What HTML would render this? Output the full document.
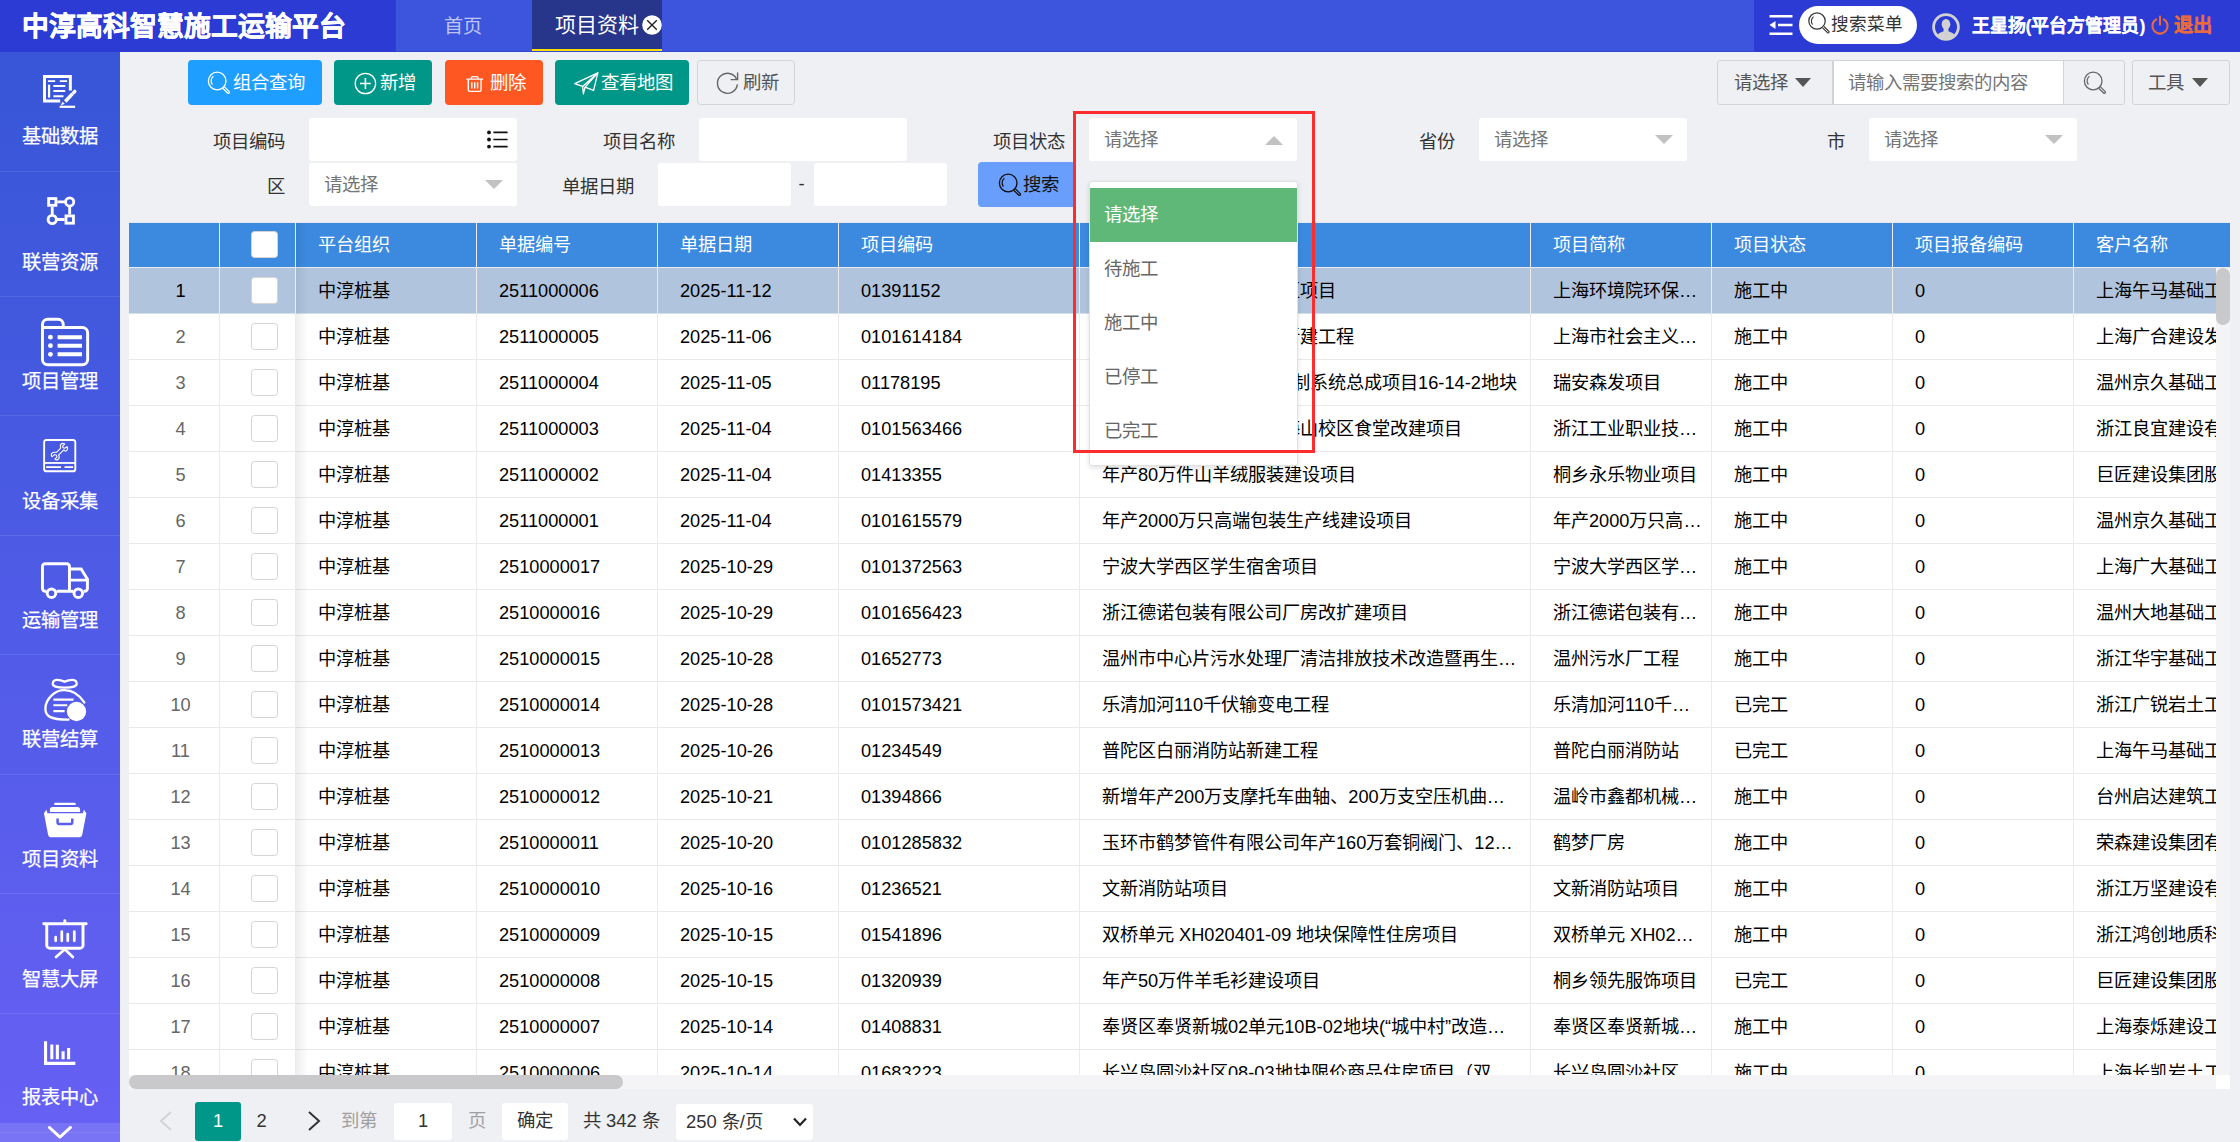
<!DOCTYPE html>
<html lang="zh-CN">
<head>
<meta charset="utf-8">
<title>项目资料</title>
<style>
*{box-sizing:border-box;margin:0;padding:0}
html,body{width:2240px;height:1142px;overflow:hidden}
body{position:relative;background:#eff0f4;font-family:"Liberation Sans",sans-serif;font-size:18.4px;color:#333}
.abs{position:absolute}
i{font-style:normal}
svg{position:absolute;overflow:visible}
/* header */
#logo{left:0;top:0;width:396px;height:52px;background:#2b3bd3}
#logo span{position:absolute;left:22px;top:2px;line-height:51px;font-size:26.8px;font-weight:bold;color:#fff;white-space:nowrap;-webkit-text-stroke:0.5px #fff}
#tabs{left:396px;top:0;width:1358px;height:52px;background:#3c55dc}
#hright{left:1754px;top:0;width:486px;height:52px;background:#2b3bd3}
.tab{position:absolute;top:0;height:52px;line-height:52px;white-space:nowrap}
#tab1{left:395px;width:136px;text-align:center;padding-top:0.5px;color:rgba(255,255,255,.68);font-size:19.2px}
#tab2{left:532px;width:130px;background:#27358a;color:#fff;font-size:21px;border-bottom:3px solid #ffe000;line-height:50px}
#tab2 span{position:absolute;left:23px}
/* sidebar */
#side{left:0;top:52px;width:120px;height:1090px;background:linear-gradient(180deg,#3856d7 0%,#4459df 30%,#545ce9 60%,#6760f4 100%)}
.sl{position:absolute;left:0;width:120px;text-align:center;color:#fff;font-size:19.3px;line-height:24px;margin-top:1.6px;-webkit-text-stroke:0.25px #fff;white-space:nowrap}
.sep{position:absolute;left:0;width:120px;height:1px;background:rgba(255,255,255,.09)}
#sdown{left:0;top:1123px;width:120px;height:19px;background:rgba(255,255,255,.12)}
/* toolbar */
.btn{position:absolute;top:60px;height:45px;border-radius:4px;color:#fff;white-space:nowrap;line-height:45px}
.btn span{position:absolute;top:0}
.bbd{border:1px solid #d3d3d4;color:#555;background:transparent}
/* form */
.lab{position:absolute;text-align:right;color:#333;white-space:nowrap;line-height:43px;height:43px;margin-left:-1px;padding-top:1.6px}
.inp{position:absolute;background:#fff;border-radius:3px;height:43px;line-height:43px;color:#757575;white-space:nowrap}
.inp span{position:absolute;left:15px;top:0}
.tri{position:absolute;width:0;height:0;border-left:9px solid transparent;border-right:9px solid transparent;border-top:9px solid #c2c2c2}
.triu{position:absolute;width:0;height:0;border-left:9px solid transparent;border-right:9px solid transparent;border-bottom:9px solid #c2c2c2}
/* table */
#thead{left:129px;top:222px;width:2101px;height:46px;background:#3c8adf;overflow:hidden;border-top:1px solid #e9e6e6}
#thead .c{color:#fff;height:45px;line-height:45px;top:0;border-bottom:1px solid #ececec}
#tbody{left:129px;top:268px;width:2087px;height:807px;background:#fff;overflow:hidden}
.r{position:absolute;left:0;width:2200px;height:46px}
.r.sel{background:#b0c4de}
.c{position:absolute;top:0;height:46px;line-height:47px;padding:0 0 0 22px;font-size:18.2px;white-space:nowrap;overflow:hidden;color:#000;border-bottom:1px solid #e9e9e9}
.num{text-align:center;padding:0 0 0 13px;color:#666}
.sel .num{color:#000}
.sel .c{border-bottom-color:#d5deeb}
.chk{padding:0}
.cb{position:absolute;left:31px;top:9px;width:27px;height:27px;border:1px solid #d6d3d0;border-radius:3.5px;background:#fff}
#thead .cb{top:8px}
.vl{position:absolute;top:0;width:1px;background:#ebebeb}
.vlh{position:absolute;top:0;width:1px;height:46px;background:#ececec}
/* dropdown */
#dd{left:1088.5px;top:181px;width:209px;height:285px;background:#fff;border:1px solid #e2e2e2;border-radius:3px;box-shadow:0 2px 5px rgba(0,0,0,.12)}
#dd div{position:absolute;left:0;width:207px;height:53.6px;line-height:53px;padding-left:14px;color:#666;white-space:nowrap}
#dd div.on{background:#5fb878;color:#fff}
#redbox{left:1073px;top:111px;width:242px;height:342px;border:3px solid #fd2d2f}
/* page */
.pg{position:absolute;white-space:nowrap;line-height:38px;height:38px;top:1102px}
</style>
</head>
<body>
<!-- header -->
<div id="logo" class="abs"><span>中淳高科智慧施工运输平台</span></div>
<div id="tabs" class="abs"></div>
<div id="tab1" class="tab">首页</div>
<div id="tab2" class="tab"><span>项目资料</span>
<svg style="left:110px;top:14.5px" width="20" height="20" viewBox="0 0 20 20"><circle cx="10" cy="10" r="9.8" fill="#fff"/><path d="M5.2 5.2L14.8 14.8M14.8 5.2L5.2 14.8" stroke="#222" stroke-width="1.4" fill="none"/></svg>
</div>
<div id="hright" class="abs"></div>
<div class="abs" style="left:396px;top:51px;width:1358px;height:1px;background:#3049d3"></div><div class="abs" style="left:395px;top:0;width:1px;height:52px;background:#2d42bd"></div>
<svg style="left:1769px;top:14px" width="24" height="22" viewBox="0 0 24 22"><path d="M0.5 2.2H23.5M9 11H23.5M0.5 19.8H23.5" stroke="#fff" stroke-width="2.6" fill="none"/><path d="M0.5 11L6.5 7V15Z" fill="#fff"/></svg>
<div class="abs" style="left:1799px;top:5.5px;width:117.5px;height:38.5px;border-radius:20px;background:#fff"></div>
<svg style="left:1808px;top:12px" width="22" height="22" viewBox="0 0 22 22"><circle cx="9" cy="9" r="8.2" fill="none" stroke="#333" stroke-width="1.2"/><path d="M4.6 12.5A5.6 5.6 0 0 1 5.6 4.6" fill="none" stroke="#333" stroke-width="1.1"/><path d="M14.6 15.8L19.5 20.6A0.9 0.9 0 0 0 20.9 19.3L16 14.5" fill="#fff" stroke="#333" stroke-width="1.1"/></svg>
<div class="abs" style="left:1831px;top:5.5px;height:38.5px;line-height:37px;font-size:17.6px;color:#333;white-space:nowrap">搜索菜单</div>
<svg style="left:1932px;top:13px" width="28" height="28" viewBox="0 0 28 28"><circle cx="14" cy="14" r="12.4" fill="#2b3bd3" stroke="#d2d2d2" stroke-width="2.8"/><ellipse cx="14" cy="11.2" rx="4.3" ry="5.2" fill="#d2d2d2"/><path d="M11.6 14.5H16.4V18.2C18.6 19.2 21.6 19.6 22.8 22.3A12 12 0 0 1 5.2 22.3C6.4 19.6 9.4 19.2 11.6 18.2Z" fill="#d2d2d2"/></svg>
<div class="abs" style="left:1971.5px;top:0;height:52px;line-height:52px;font-size:17.9px;font-weight:bold;color:#fff;white-space:nowrap;-webkit-text-stroke:0.15px #fff">王星扬(平台方管理员)</div>
<svg style="left:2151px;top:16px" width="18" height="18" viewBox="0 0 18 18"><path d="M5.2 3.4A7.6 7.6 0 1 0 12.8 3.4" fill="none" stroke="#e8693e" stroke-width="2.1" stroke-linecap="round"/><path d="M9 0.6V8.8" stroke="#e8693e" stroke-width="2.1" stroke-linecap="round"/></svg>
<div class="abs" style="left:2174px;top:0;height:52px;line-height:51px;font-size:19.2px;font-weight:bold;color:#ea6a40;white-space:nowrap;-webkit-text-stroke:0.3px #ea6a40">退出</div>
<!-- sidebar -->
<div id="side" class="abs"></div>
<div class="sep" style="top:171px"></div><div class="sep" style="top:296px"></div><div class="sep" style="top:415px"></div><div class="sep" style="top:535px"></div><div class="sep" style="top:654px"></div><div class="sep" style="top:774px"></div><div class="sep" style="top:893px"></div><div class="sep" style="top:1013px"></div>
<div id="sdown" class="abs"></div><div class="sep" style="top:1132px"></div>
<svg style="left:0;top:52px" width="120" height="120" viewBox="0 0 1142 1142" fill="none" stroke="#fff"><path d="M573 466H423.5V233.6H669.5V366" stroke-width="28" stroke-linejoin="miter"/><path d="M456 277H525M569 277H638M508 323.6H621M508 371H621M508 421H604" stroke-width="18"/><path d="M467 311V434" stroke-width="21"/><path d="M621 471L691 396" stroke-width="34"/><path d="M702 385L712 375" stroke-width="32" stroke-linecap="round"/><path d="M577 510L594 473L617 492Z" fill="#fff" stroke="none"/><path d="M568 521.6H715" stroke-width="21"/></svg>
<svg style="left:0;top:172px" width="120" height="120" viewBox="0 0 1142 1142" fill="none" stroke="#fff" stroke-width="27"><rect x="463" y="253" width="69" height="64"/><circle cx="663" cy="285" r="39"/><circle cx="497" cy="452" r="39"/><rect x="628" y="418" width="71" height="69"/><path d="M545 285H624M663 324V405M536 452H615M497 330V413"/></svg>
<svg style="left:0;top:296px" width="120" height="120" viewBox="0 0 1142 1142" fill="none" stroke="#fff" stroke-width="28"><path d="M404 604V271A50 50 0 0 1 454 221H552A50 50 0 0 1 602 271V299H784A50 50 0 0 1 834 349V604A50 50 0 0 1 784 654H454A50 50 0 0 1 404 604ZM404 299H602"/><path d="M548 392H780M548 473H780M548 555H780" stroke-width="38"/><g fill="#fff" stroke="none"><circle cx="480" cy="392" r="23"/><circle cx="480" cy="473" r="23"/><circle cx="480" cy="555" r="23"/></g></svg>
<svg style="left:0;top:416px" width="120" height="120" viewBox="0 0 1142 1142" fill="none" stroke="#fff" stroke-width="18"><rect x="420" y="228" width="296.7" height="298.3" rx="23"/><path d="M420 447H716.7" stroke-width="17"/><path d="M439 486.3H581M614 486.3H696" stroke-width="16"/><g transform="translate(380.7,190.3) scale(0.3333)"><path d="M590 345C600 310 560 280 590 245C615 215 665 205 705 230L645 290C640 320 670 350 705 350L770 305C800 340 790 400 745 425C715 440 690 420 680 395L530 545C570 590 550 650 500 675C470 685 440 675 425 660L490 595C480 560 450 530 415 530L345 590C310 570 315 510 350 480C385 450 430 470 470 465Z" stroke-width="32" stroke-linejoin="round"/></g></svg>
<svg style="left:0;top:536px" width="120" height="120" viewBox="0 0 1142 1142" fill="none" stroke="#fff" stroke-width="28"><path d="M440 526H430A26 26 0 0 1 404 500V290A26 26 0 0 1 430 264H635A26 26 0 0 1 661 290V526M540 526H695M661 314H772L832 410V500A26 26 0 0 1 806 526H796M661 420H832"/><circle cx="490" cy="545" r="41"/><circle cx="745" cy="545" r="41"/></svg>
<svg style="left:0;top:656px" width="120" height="120" viewBox="0 0 1142 1142" fill="none" stroke="#fff" stroke-width="22"><path d="M502 268C500 210 570 225 615 244C660 225 732 210 730 268C728 312 504 312 502 268Z"/><path d="M802 442C745 355 680 325 612 325C520 325 432 410 432 500C432 572 470 604 652 606" stroke-linecap="round"/><path d="M508 415H700M508 468H640M508 525H615" stroke-width="20"/><circle cx="728" cy="528" r="92" fill="#fff" stroke="none"/></svg>
<svg style="left:0;top:776px" width="120" height="120" viewBox="0 0 1142 1142" fill="#fff" stroke="none"><rect x="515" y="255" width="207" height="22" rx="11"/><path d="M475 342V320A25 25 0 0 1 500 295H737A25 25 0 0 1 762 320V342Z"/><path d="M442 322L452 354H788L798 322L822 354L782 562A24 24 0 0 1 760 582H480A24 24 0 0 1 458 562L418 354Z"/><path d="M548 405V440A16 16 0 0 0 564 456H672A16 16 0 0 0 688 440V405" fill="none" stroke="#5a5eed" stroke-width="24"/></svg>
<svg style="left:0;top:896px" width="120" height="120" viewBox="0 0 1142 1142" fill="none" stroke="#fff" stroke-width="28" stroke-linecap="round"><path d="M416 265H820M617 236V265"/><path d="M445 265V468A29 29 0 0 0 474 497H761A29 29 0 0 0 790 468V265" stroke-linecap="butt"/><path d="M617 507L533 580M617 507L693 580" stroke-width="26"/><path d="M530 392V426M588 338V426M645 362V426M707 338V426" stroke-width="26"/></svg>
<svg style="left:0;top:1016px" width="120" height="126" viewBox="0 0 1088 1142" fill="none" stroke="#fff" stroke-width="28"><path d="M413 228V429H683"/><path d="M470 258V392M520 260V392M572 320V392M622 290V392"/><path d="M447 1010L543 1098L640 1010" stroke-width="26" stroke-linecap="round" stroke-linejoin="round"/></svg>
<div class="sl" style="top:123.5px">基础数据</div>
<div class="sl" style="top:249px">联营资源</div>
<div class="sl" style="top:368px">项目管理</div>
<div class="sl" style="top:488px">设备采集</div>
<div class="sl" style="top:607px">运输管理</div>
<div class="sl" style="top:726.7px">联营结算</div>
<div class="sl" style="top:846px">项目资料</div>
<div class="sl" style="top:966px">智慧大屏</div>
<div class="sl" style="top:1084.8px">报表中心</div>

<!-- toolbar -->
<div class="btn" style="left:188px;width:134px;background:#1e9fff"><svg style="left:19px;top:11px" width="24" height="24" viewBox="0 0 24 24" fill="none" stroke="#fff"><circle cx="10.2" cy="10" r="8.8" stroke-width="1.3"/><path d="M5.4 13.6A6 6 0 0 1 6.4 5.2" stroke-width="1.2"/><path d="M15.6 17.2L20.6 22A1 1 0 0 0 22.2 20.6L17.2 15.6" stroke-width="1.3"/></svg><span style="left:45px">组合查询</span></div>
<div class="btn" style="left:334px;width:98px;background:#009688"><svg style="left:19.5px;top:11.5px" width="23" height="23" viewBox="0 0 23 23" fill="none" stroke="#fff"><circle cx="11.4" cy="11.5" r="10.2" stroke-width="1.3"/><path d="M6 11.5H16.8M11.4 6.1V16.9" stroke-width="1.6"/></svg><span style="left:46px">新增</span></div>
<div class="btn" style="left:445px;width:98px;background:#ff5722"><svg style="left:21.2px;top:15.5px" width="17.4" height="16.2" viewBox="0 0 18 18" preserveAspectRatio="none" fill="none" stroke="#fff" stroke-width="1.4"><path d="M0.3 3.6H17.7M5.6 3.4V1.9A1.2 1.2 0 0 1 6.8 0.7H11.2A1.2 1.2 0 0 1 12.4 1.9V3.4"/><path d="M2.4 3.8V15.6A1.6 1.6 0 0 0 4 17.2H14A1.6 1.6 0 0 0 15.6 15.6V3.8"/><path d="M6 7V14M9 7V14M12 7V14" stroke-width="1.5"/></svg><span style="left:45px">删除</span></div>
<div class="btn" style="left:555px;width:134px;background:#009688"><svg style="left:19px;top:11.5px" width="25" height="23" viewBox="0 0 25 23" fill="none" stroke="#fff" stroke-width="1.3" stroke-linejoin="round"><path d="M0.8 11.6L23.8 0.8L19.6 18.4L11 15.2L9.4 21.8L8.6 14.4Z"/><path d="M8.6 14.4L23.8 0.8L11 15.2"/></svg><span style="left:45.5px">查看地图</span></div>
<div class="btn bbd" style="left:697px;width:98px"><svg style="left:17.5px;top:9.5px" width="23" height="23" viewBox="0 0 23 23" fill="none" stroke="#666" stroke-width="1.4"><path d="M20.6 8.2A10 10 0 1 0 21.4 13.4"/><path d="M21.6 1.6V8.6H14.6"/></svg><span style="left:44.5px;top:-1px">刷新</span></div>
<div class="btn bbd" style="left:1717px;width:116px;border-radius:3px 0 0 3px"><span style="left:15.5px;top:-1px;color:#555">请选择</span><i class="abs" style="left:77px;top:17px;border-left:8.5px solid transparent;border-right:8.5px solid transparent;border-top:9px solid #555"></i></div>
<div class="btn" style="left:1832.5px;width:231px;background:#fff;border:1px solid #d3d3d4;border-radius:0;color:#757575"><span style="left:14.5px;top:-1.5px">请输入需要搜索的内容</span></div>
<div class="btn bbd" style="left:2063px;width:61.5px;border-radius:0 3px 3px 0"><svg style="left:18.5px;top:9.5px" width="24" height="24" viewBox="0 0 24 24" fill="none" stroke="#666"><circle cx="10.2" cy="10" r="8.8" stroke-width="1.3"/><path d="M5.4 13.6A6 6 0 0 1 6.4 5.2" stroke-width="1.2"/><path d="M15.6 17.2L20.6 22A1 1 0 0 0 22.2 20.6L17.2 15.6" stroke-width="1.3"/></svg></div>
<div class="btn bbd" style="left:2132px;width:97.5px;border-radius:3px"><span style="left:15px;top:-1px;color:#555">工具</span><i class="abs" style="left:58.5px;top:17px;border-left:8.5px solid transparent;border-right:8.5px solid transparent;border-top:9px solid #555"></i></div>

<!-- form -->
<div class="lab" style="left:160px;width:125.5px;top:118px">项目编码</div>
<div class="inp" style="left:309px;width:208px;top:118px"><svg style="left:178px;top:11.5px" width="21" height="19" viewBox="0 0 21 19"><g fill="#111"><circle cx="2" cy="2.4" r="1.9"/><circle cx="2" cy="9.5" r="1.9"/><circle cx="2" cy="16.6" r="1.9"/></g><path d="M6.4 2.4H20.6M6.4 9.5H20.6M6.4 16.6H20.6" stroke="#111" stroke-width="1.6"/></svg></div>
<div class="lab" style="left:550px;width:125.5px;top:118px">项目名称</div>
<div class="inp" style="left:699px;width:208px;top:118px"></div>
<div class="lab" style="left:940px;width:125.5px;top:118px">项目状态</div>
<div class="inp" style="left:1089px;width:208px;top:118px"><span>请选择</span><i class="triu" style="left:176px;top:17.5px"></i></div>
<div class="lab" style="left:1330px;width:125.5px;top:118px">省份</div>
<div class="inp" style="left:1479px;width:208px;top:118px"><span>请选择</span><i class="tri" style="left:176px;top:17px"></i></div>
<div class="lab" style="left:1720px;width:125.5px;top:118px">市</div>
<div class="inp" style="left:1869px;width:208px;top:118px"><span>请选择</span><i class="tri" style="left:176px;top:17px"></i></div>
<div class="lab" style="left:160px;width:125.5px;top:163.2px">区</div>
<div class="inp" style="left:309px;width:208px;top:163.2px"><span>请选择</span><i class="tri" style="left:176px;top:17px"></i></div>
<div class="lab" style="left:509px;width:125.5px;top:163.2px">单据日期</div>
<div class="inp" style="left:658px;width:133px;top:163.2px"></div>
<div class="abs" style="left:798.5px;top:163.2px;line-height:42px;color:#333">-</div>
<div class="inp" style="left:814px;width:133px;top:163.2px"></div>
<div class="btn" style="left:978px;top:162px;width:98px;height:45px;background:#6a9efc;color:#111"><svg style="left:20px;top:11px" width="24" height="24" viewBox="0 0 24 24" fill="none" stroke="#111"><circle cx="10.2" cy="10" r="8.8" stroke-width="1.3"/><path d="M5.4 13.6A6 6 0 0 1 6.4 5.2" stroke-width="1.2"/><path d="M15.6 17.2L20.6 22A1 1 0 0 0 22.2 20.6L17.2 15.6" stroke-width="1.3"/></svg><span style="left:45px;top:-0.5px">搜索</span></div>

<!-- table -->
<div id="thead" class="abs"><div class="c " style="left:0px;width:90px"></div><div class="c chk" style="left:91px;width:75px"><i class="cb"></i></div><div class="c " style="left:167px;width:180px">平台组织</div><div class="c " style="left:348px;width:180px">单据编号</div><div class="c " style="left:529px;width:180px">单据日期</div><div class="c " style="left:710px;width:240px">项目编码</div><div class="c " style="left:951px;width:450px">项目名称</div><div class="c " style="left:1402px;width:180px">项目简称</div><div class="c " style="left:1583px;width:180px">项目状态</div><div class="c " style="left:1764px;width:180px">项目报备编码</div><div class="c " style="left:1945px;width:180px">客户名称</div></div>
<div id="tbody" class="abs">
<div class="r sel" style="top:0px"><div class="c num" style="left:0px;width:90px">1</div><div class="c chk" style="left:91px;width:75px"><i class="cb"></i></div><div class="c " style="left:167px;width:180px">中淳桩基</div><div class="c " style="left:348px;width:180px">2511000006</div><div class="c " style="left:529px;width:180px">2025-11-12</div><div class="c " style="left:710px;width:240px">01391152</div><div class="c " style="left:951px;width:450px">上海环境院环保科技园区项目</div><div class="c " style="left:1402px;width:180px">上海环境院环保…</div><div class="c " style="left:1583px;width:180px">施工中</div><div class="c " style="left:1764px;width:180px">0</div><div class="c " style="left:1945px;width:180px">上海午马基础工程</div></div>
<div class="r" style="top:46px"><div class="c num" style="left:0px;width:90px">2</div><div class="c chk" style="left:91px;width:75px"><i class="cb"></i></div><div class="c " style="left:167px;width:180px">中淳桩基</div><div class="c " style="left:348px;width:180px">2511000005</div><div class="c " style="left:529px;width:180px">2025-11-06</div><div class="c " style="left:710px;width:240px">0101614184</div><div class="c " style="left:951px;width:450px">上海市社会主义学院楼新建工程</div><div class="c " style="left:1402px;width:180px">上海市社会主义…</div><div class="c " style="left:1583px;width:180px">施工中</div><div class="c " style="left:1764px;width:180px">0</div><div class="c " style="left:1945px;width:180px">上海广合建设发展</div></div>
<div class="r" style="top:92px"><div class="c num" style="left:0px;width:90px">3</div><div class="c chk" style="left:91px;width:75px"><i class="cb"></i></div><div class="c " style="left:167px;width:180px">中淳桩基</div><div class="c " style="left:348px;width:180px">2511000004</div><div class="c " style="left:529px;width:180px">2025-11-05</div><div class="c " style="left:710px;width:240px">01178195</div><div class="c " style="left:951px;width:450px">瑞安森发汽车电子2期控制系统总成项目16-14-2地块</div><div class="c " style="left:1402px;width:180px">瑞安森发项目</div><div class="c " style="left:1583px;width:180px">施工中</div><div class="c " style="left:1764px;width:180px">0</div><div class="c " style="left:1945px;width:180px">温州京久基础工程</div></div>
<div class="r" style="top:138px"><div class="c num" style="left:0px;width:90px">4</div><div class="c chk" style="left:91px;width:75px"><i class="cb"></i></div><div class="c " style="left:167px;width:180px">中淳桩基</div><div class="c " style="left:348px;width:180px">2511000003</div><div class="c " style="left:529px;width:180px">2025-11-04</div><div class="c " style="left:710px;width:240px">0101563466</div><div class="c " style="left:951px;width:450px">浙江工业职业技术学院梅山校区食堂改建项目</div><div class="c " style="left:1402px;width:180px">浙江工业职业技…</div><div class="c " style="left:1583px;width:180px">施工中</div><div class="c " style="left:1764px;width:180px">0</div><div class="c " style="left:1945px;width:180px">浙江良宜建设有限</div></div>
<div class="r" style="top:184px"><div class="c num" style="left:0px;width:90px">5</div><div class="c chk" style="left:91px;width:75px"><i class="cb"></i></div><div class="c " style="left:167px;width:180px">中淳桩基</div><div class="c " style="left:348px;width:180px">2511000002</div><div class="c " style="left:529px;width:180px">2025-11-04</div><div class="c " style="left:710px;width:240px">01413355</div><div class="c " style="left:951px;width:450px">年产80万件山羊绒服装建设项目</div><div class="c " style="left:1402px;width:180px">桐乡永乐物业项目</div><div class="c " style="left:1583px;width:180px">施工中</div><div class="c " style="left:1764px;width:180px">0</div><div class="c " style="left:1945px;width:180px">巨匠建设集团股份</div></div>
<div class="r" style="top:230px"><div class="c num" style="left:0px;width:90px">6</div><div class="c chk" style="left:91px;width:75px"><i class="cb"></i></div><div class="c " style="left:167px;width:180px">中淳桩基</div><div class="c " style="left:348px;width:180px">2511000001</div><div class="c " style="left:529px;width:180px">2025-11-04</div><div class="c " style="left:710px;width:240px">0101615579</div><div class="c " style="left:951px;width:450px">年产2000万只高端包装生产线建设项目</div><div class="c " style="left:1402px;width:180px">年产2000万只高…</div><div class="c " style="left:1583px;width:180px">施工中</div><div class="c " style="left:1764px;width:180px">0</div><div class="c " style="left:1945px;width:180px">温州京久基础工程</div></div>
<div class="r" style="top:276px"><div class="c num" style="left:0px;width:90px">7</div><div class="c chk" style="left:91px;width:75px"><i class="cb"></i></div><div class="c " style="left:167px;width:180px">中淳桩基</div><div class="c " style="left:348px;width:180px">2510000017</div><div class="c " style="left:529px;width:180px">2025-10-29</div><div class="c " style="left:710px;width:240px">0101372563</div><div class="c " style="left:951px;width:450px">宁波大学西区学生宿舍项目</div><div class="c " style="left:1402px;width:180px">宁波大学西区学…</div><div class="c " style="left:1583px;width:180px">施工中</div><div class="c " style="left:1764px;width:180px">0</div><div class="c " style="left:1945px;width:180px">上海广大基础工程</div></div>
<div class="r" style="top:322px"><div class="c num" style="left:0px;width:90px">8</div><div class="c chk" style="left:91px;width:75px"><i class="cb"></i></div><div class="c " style="left:167px;width:180px">中淳桩基</div><div class="c " style="left:348px;width:180px">2510000016</div><div class="c " style="left:529px;width:180px">2025-10-29</div><div class="c " style="left:710px;width:240px">0101656423</div><div class="c " style="left:951px;width:450px">浙江德诺包装有限公司厂房改扩建项目</div><div class="c " style="left:1402px;width:180px">浙江德诺包装有…</div><div class="c " style="left:1583px;width:180px">施工中</div><div class="c " style="left:1764px;width:180px">0</div><div class="c " style="left:1945px;width:180px">温州大地基础工程</div></div>
<div class="r" style="top:368px"><div class="c num" style="left:0px;width:90px">9</div><div class="c chk" style="left:91px;width:75px"><i class="cb"></i></div><div class="c " style="left:167px;width:180px">中淳桩基</div><div class="c " style="left:348px;width:180px">2510000015</div><div class="c " style="left:529px;width:180px">2025-10-28</div><div class="c " style="left:710px;width:240px">01652773</div><div class="c " style="left:951px;width:450px">温州市中心片污水处理厂清洁排放技术改造暨再生…</div><div class="c " style="left:1402px;width:180px">温州污水厂工程</div><div class="c " style="left:1583px;width:180px">施工中</div><div class="c " style="left:1764px;width:180px">0</div><div class="c " style="left:1945px;width:180px">浙江华宇基础工程</div></div>
<div class="r" style="top:414px"><div class="c num" style="left:0px;width:90px">10</div><div class="c chk" style="left:91px;width:75px"><i class="cb"></i></div><div class="c " style="left:167px;width:180px">中淳桩基</div><div class="c " style="left:348px;width:180px">2510000014</div><div class="c " style="left:529px;width:180px">2025-10-28</div><div class="c " style="left:710px;width:240px">0101573421</div><div class="c " style="left:951px;width:450px">乐清加河110千伏输变电工程</div><div class="c " style="left:1402px;width:180px">乐清加河110千…</div><div class="c " style="left:1583px;width:180px">已完工</div><div class="c " style="left:1764px;width:180px">0</div><div class="c " style="left:1945px;width:180px">浙江广锐岩土工程</div></div>
<div class="r" style="top:460px"><div class="c num" style="left:0px;width:90px">11</div><div class="c chk" style="left:91px;width:75px"><i class="cb"></i></div><div class="c " style="left:167px;width:180px">中淳桩基</div><div class="c " style="left:348px;width:180px">2510000013</div><div class="c " style="left:529px;width:180px">2025-10-26</div><div class="c " style="left:710px;width:240px">01234549</div><div class="c " style="left:951px;width:450px">普陀区白丽消防站新建工程</div><div class="c " style="left:1402px;width:180px">普陀白丽消防站</div><div class="c " style="left:1583px;width:180px">已完工</div><div class="c " style="left:1764px;width:180px">0</div><div class="c " style="left:1945px;width:180px">上海午马基础工程</div></div>
<div class="r" style="top:506px"><div class="c num" style="left:0px;width:90px">12</div><div class="c chk" style="left:91px;width:75px"><i class="cb"></i></div><div class="c " style="left:167px;width:180px">中淳桩基</div><div class="c " style="left:348px;width:180px">2510000012</div><div class="c " style="left:529px;width:180px">2025-10-21</div><div class="c " style="left:710px;width:240px">01394866</div><div class="c " style="left:951px;width:450px">新增年产200万支摩托车曲轴、200万支空压机曲…</div><div class="c " style="left:1402px;width:180px">温岭市鑫都机械…</div><div class="c " style="left:1583px;width:180px">施工中</div><div class="c " style="left:1764px;width:180px">0</div><div class="c " style="left:1945px;width:180px">台州启达建筑工程</div></div>
<div class="r" style="top:552px"><div class="c num" style="left:0px;width:90px">13</div><div class="c chk" style="left:91px;width:75px"><i class="cb"></i></div><div class="c " style="left:167px;width:180px">中淳桩基</div><div class="c " style="left:348px;width:180px">2510000011</div><div class="c " style="left:529px;width:180px">2025-10-20</div><div class="c " style="left:710px;width:240px">0101285832</div><div class="c " style="left:951px;width:450px">玉环市鹤梦管件有限公司年产160万套铜阀门、12…</div><div class="c " style="left:1402px;width:180px">鹤梦厂房</div><div class="c " style="left:1583px;width:180px">施工中</div><div class="c " style="left:1764px;width:180px">0</div><div class="c " style="left:1945px;width:180px">荣森建设集团有限</div></div>
<div class="r" style="top:598px"><div class="c num" style="left:0px;width:90px">14</div><div class="c chk" style="left:91px;width:75px"><i class="cb"></i></div><div class="c " style="left:167px;width:180px">中淳桩基</div><div class="c " style="left:348px;width:180px">2510000010</div><div class="c " style="left:529px;width:180px">2025-10-16</div><div class="c " style="left:710px;width:240px">01236521</div><div class="c " style="left:951px;width:450px">文新消防站项目</div><div class="c " style="left:1402px;width:180px">文新消防站项目</div><div class="c " style="left:1583px;width:180px">施工中</div><div class="c " style="left:1764px;width:180px">0</div><div class="c " style="left:1945px;width:180px">浙江万坚建设有限</div></div>
<div class="r" style="top:644px"><div class="c num" style="left:0px;width:90px">15</div><div class="c chk" style="left:91px;width:75px"><i class="cb"></i></div><div class="c " style="left:167px;width:180px">中淳桩基</div><div class="c " style="left:348px;width:180px">2510000009</div><div class="c " style="left:529px;width:180px">2025-10-15</div><div class="c " style="left:710px;width:240px">01541896</div><div class="c " style="left:951px;width:450px">双桥单元 XH020401-09 地块保障性住房项目</div><div class="c " style="left:1402px;width:180px">双桥单元 XH02…</div><div class="c " style="left:1583px;width:180px">施工中</div><div class="c " style="left:1764px;width:180px">0</div><div class="c " style="left:1945px;width:180px">浙江鸿创地质科技</div></div>
<div class="r" style="top:690px"><div class="c num" style="left:0px;width:90px">16</div><div class="c chk" style="left:91px;width:75px"><i class="cb"></i></div><div class="c " style="left:167px;width:180px">中淳桩基</div><div class="c " style="left:348px;width:180px">2510000008</div><div class="c " style="left:529px;width:180px">2025-10-15</div><div class="c " style="left:710px;width:240px">01320939</div><div class="c " style="left:951px;width:450px">年产50万件羊毛衫建设项目</div><div class="c " style="left:1402px;width:180px">桐乡领先服饰项目</div><div class="c " style="left:1583px;width:180px">已完工</div><div class="c " style="left:1764px;width:180px">0</div><div class="c " style="left:1945px;width:180px">巨匠建设集团股份</div></div>
<div class="r" style="top:736px"><div class="c num" style="left:0px;width:90px">17</div><div class="c chk" style="left:91px;width:75px"><i class="cb"></i></div><div class="c " style="left:167px;width:180px">中淳桩基</div><div class="c " style="left:348px;width:180px">2510000007</div><div class="c " style="left:529px;width:180px">2025-10-14</div><div class="c " style="left:710px;width:240px">01408831</div><div class="c " style="left:951px;width:450px">奉贤区奉贤新城02单元10B-02地块(“城中村”改造…</div><div class="c " style="left:1402px;width:180px">奉贤区奉贤新城…</div><div class="c " style="left:1583px;width:180px">施工中</div><div class="c " style="left:1764px;width:180px">0</div><div class="c " style="left:1945px;width:180px">上海泰烁建设工程</div></div>
<div class="r" style="top:782px"><div class="c num" style="left:0px;width:90px">18</div><div class="c chk" style="left:91px;width:75px"><i class="cb"></i></div><div class="c " style="left:167px;width:180px">中淳桩基</div><div class="c " style="left:348px;width:180px">2510000006</div><div class="c " style="left:529px;width:180px">2025-10-14</div><div class="c " style="left:710px;width:240px">01683223</div><div class="c " style="left:951px;width:450px">长兴岛圆沙社区08-03地块限价商品住房项目（双…</div><div class="c " style="left:1402px;width:180px">长兴岛圆沙社区…</div><div class="c " style="left:1583px;width:180px">施工中</div><div class="c " style="left:1764px;width:180px">0</div><div class="c " style="left:1945px;width:180px">上海长凯岩土工程</div></div>
</div>
<div id="vlines" class="abs" style="left:129px;top:268px;width:2087px;height:807px;overflow:hidden;pointer-events:none">
<i class="vl" style="left:90px;height:807px"></i><i class="vl" style="left:166px;height:807px"></i><i class="vl" style="left:347px;height:807px"></i><i class="vl" style="left:528px;height:807px"></i><i class="vl" style="left:709px;height:807px"></i><i class="vl" style="left:950px;height:807px"></i><i class="vl" style="left:1401px;height:807px"></i><i class="vl" style="left:1582px;height:807px"></i><i class="vl" style="left:1763px;height:807px"></i><i class="vl" style="left:1944px;height:807px"></i>
<i class="abs" style="left:167px;top:0;width:12px;height:807px;background:linear-gradient(90deg,rgba(0,0,0,.07),rgba(0,0,0,0))"></i>
</div>
<div class="abs" style="left:129px;top:222px;width:2101px;height:46px;overflow:hidden;pointer-events:none">
<i class="abs" style="left:167px;top:1px;width:12px;height:45px;background:linear-gradient(90deg,rgba(0,0,0,.07),rgba(0,0,0,0))"></i><i class="vlh" style="left:90px"></i><i class="vlh" style="left:166px"></i><i class="vlh" style="left:347px"></i><i class="vlh" style="left:528px"></i><i class="vlh" style="left:709px"></i><i class="vlh" style="left:950px"></i><i class="vlh" style="left:1401px"></i><i class="vlh" style="left:1582px"></i><i class="vlh" style="left:1763px"></i><i class="vlh" style="left:1944px"></i>
</div>
<div class="abs" style="left:2216px;top:268px;width:14px;height:807px;background:#f4f4f6"></div>
<div class="abs" style="left:2216px;top:268px;width:14px;height:57px;border-radius:7px;background:#c9c9cb"></div>
<div class="abs" style="left:129px;top:1075px;width:2087px;height:14px;background:#f4f4f6"></div>
<div class="abs" style="left:129px;top:1075px;width:494px;height:14px;border-radius:7px;background:#c9c9cb"></div>
<div class="abs" style="left:2216px;top:1075px;width:14px;height:14px;background:#fff"></div>

<!-- dropdown -->
<div id="dd" class="abs">
<div class="on" style="top:6px">请选择</div>
<div style="top:60.4px">待施工</div>
<div style="top:114.2px">施工中</div>
<div style="top:168px">已停工</div>
<div style="top:221.8px">已完工</div>
</div>
<div id="redbox" class="abs"></div>
<!-- pagination -->
<svg style="left:159px;top:1111px" width="14" height="20" viewBox="0 0 14 20" fill="none" stroke="#d2d2d2" stroke-width="2"><path d="M12 1L2 10L12 19"/></svg>
<div class="pg" style="left:195px;width:46px;height:38.5px;background:#009688;border-radius:3px;color:#fff;text-align:center">1</div>
<div class="pg" style="left:241px;width:41px;text-align:center;color:#333">2</div>
<svg style="left:306.5px;top:1111px" width="14" height="20" viewBox="0 0 14 20" fill="none" stroke="#333" stroke-width="2"><path d="M2 1L12 10L2 19"/></svg>
<div class="pg" style="left:341px;color:#a0a0a0">到第</div>
<div class="pg" style="left:394px;top:1103px;width:58px;height:36.5px;line-height:36px;background:#fff;border-radius:3px;text-align:center;color:#333">1</div>
<div class="pg" style="left:467.5px;color:#a0a0a0">页</div>
<div class="pg" style="left:502px;top:1103px;width:66px;height:36.5px;line-height:36px;background:#fff;border-radius:3px;text-align:center;color:#333">确定</div>
<div class="pg" style="left:583px;color:#333">共 342 条</div>
<div class="pg" style="left:675.5px;top:1103.5px;width:137px;height:36.5px;line-height:36px;background:#fff;border-radius:3px;color:#333;padding-left:10.5px">250 条/页</div>
<svg style="left:793px;top:1115px" width="14" height="14" viewBox="0 0 14 14" fill="none" stroke="#222" stroke-width="2.2"><path d="M1 3.5L7 10L13 3.5"/></svg>

</body>
</html>
